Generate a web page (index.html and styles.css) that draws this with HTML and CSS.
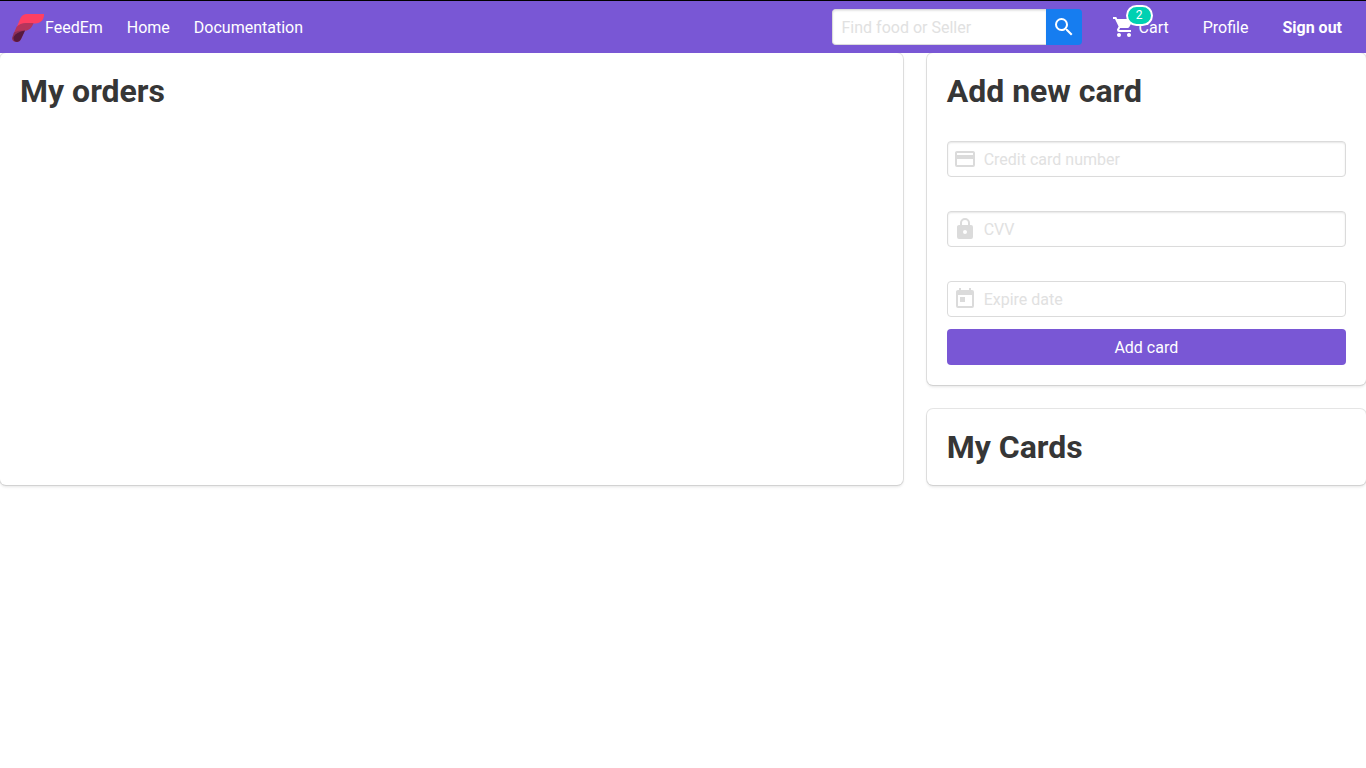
FILE: index.html
```html
<!DOCTYPE html>
<html lang="en">
<head>
<meta charset="utf-8">
<title>FeedEm</title>
<meta name="viewport" content="width=device-width, initial-scale=1">
<link rel="stylesheet" href="styles.css">
</head>
<body>
<header class="navbar">
  <nav class="navbar-start" aria-label="Main">
    <a class="navbar-item brand" href="#">
      <svg class="logo" viewBox="0 0 33 28" aria-hidden="true">
        <path fill="#ff3f62" d="M4 15 8.500 4Q10.500 0 15 0H32C32.500 5 29 9.500 23 9.500H14Q9 10 4 15Z"/>
        <path fill="#b5355c" d="M1.500 20 4.500 13Q8 9 14 9H21.500C20 14 16.500 17 11 17Q6 17.500 1.500 20Z"/>
        <path fill="#8f2f58" d="M0 24 2 18.500Q6 16 13 16.500L9 25Q8 28 5 28Q0 28 0 24Z"/>
        <path fill="#56193f" d="M1.500 23Q4 18 13 16.500L9 25Q7.500 28 5 28Q1 27.500 1.500 23Z"/>
      </svg>FeedEm</a>
    <a class="navbar-item" href="#">Home</a>
    <a class="navbar-item" href="#">Documentation</a>
  </nav>
  <div class="navbar-end">
    <form class="search" role="search">
      <input class="input search-input" type="text" placeholder="Find food or Seller" aria-label="Find food or Seller">
      <button class="search-button" type="button" aria-label="Search">
        <svg class="icon" viewBox="0 0 24 24" aria-hidden="true"><path d="M9.500 3A6.500 6.500 0 0 1 16 9.500C16 11.110 15.410 12.590 14.440 13.730L14.710 14H15.500L20.500 19L19 20.500L14 15.500V14.710L13.730 14.440C12.590 15.410 11.110 16 9.500 16A6.500 6.500 0 0 1 3 9.500A6.500 6.500 0 0 1 9.500 3M9.500 5C7 5 5 7 5 9.500C5 12 7 14 9.500 14C12 14 14 12 14 9.500C14 7 12 5 9.500 5Z"/></svg>
      </button>
    </form>
    <a class="end-link cart" href="#">
      <svg class="icon" viewBox="0 0 24 24" aria-hidden="true"><path d="M17 18C15.890 18 15 18.890 15 20A2 2 0 0 0 17 22A2 2 0 0 0 19 20C19 18.890 18.100 18 17 18M1 2V4H3L6.600 11.590L5.240 14.040C5.090 14.320 5 14.650 5 15A2 2 0 0 0 7 17H19V15H7.420A.25.25 0 0 1 7.170 14.750C7.170 14.700 7.180 14.660 7.200 14.630L8.100 13H15.550C16.300 13 16.960 12.580 17.300 11.970L20.880 5.500C20.950 5.340 21 5.170 21 5A1 1 0 0 0 20 4H5.210L4.270 2M7 18C5.890 18 5 18.890 5 20A2 2 0 0 0 7 22A2 2 0 0 0 9 20C9 18.890 8.100 18 7 18Z"/></svg>
      <span class="label">Cart</span>
      <span class="badge">2</span>
    </a>
    <a class="end-link label" href="#">Profile</a>
    <a class="end-link label strong" href="#">Sign out</a>
  </div>
</header>

<main class="tiles">
  <section class="box orders">
    <h1 class="title">My orders</h1>
  </section>
  <div class="side">
    <section class="box">
      <h1 class="title">Add new card</h1>
      <form class="card-form">
        <div class="control">
          <svg class="icon" viewBox="0 0 24 24" aria-hidden="true"><path d="M20 8H4V6H20M20 18H4V12H20M20 4H4C2.890 4 2 4.890 2 6V18A2 2 0 0 0 4 20H20A2 2 0 0 0 22 18V6C22 4.890 21.100 4 20 4Z"/></svg>
          <input class="input has-icon" type="text" placeholder="Credit card number" aria-label="Credit card number">
        </div>
        <div class="control">
          <svg class="icon" viewBox="0 0 24 24" aria-hidden="true"><path d="M12 17A2 2 0 0 0 14 15C14 13.890 13.100 13 12 13A2 2 0 0 0 10 15A2 2 0 0 0 12 17M18 8A2 2 0 0 1 20 10V20A2 2 0 0 1 18 22H6A2 2 0 0 1 4 20V10C4 8.890 4.900 8 6 8H7V6A5 5 0 0 1 12 1A5 5 0 0 1 17 6V8H18M12 3A3 3 0 0 0 9 6V8H15V6A3 3 0 0 0 12 3Z"/></svg>
          <input class="input has-icon" type="text" placeholder="CVV" aria-label="CVV">
        </div>
        <div class="control">
          <svg class="icon" viewBox="0 0 24 24" aria-hidden="true"><path d="M7 10H12V15H7M19 19H5V8H19M19 3H18V1H16V3H8V1H6V3H5C3.890 3 3 3.900 3 5V19A2 2 0 0 0 5 21H19A2 2 0 0 0 21 19V5A2 2 0 0 0 19 3Z"/></svg>
          <input class="input has-icon flat" type="text" placeholder="Expire date" aria-label="Expire date">
        </div>
        <button class="submit" type="button">Add card</button>
      </form>
    </section>
    <section class="box">
      <h1 class="title">My Cards</h1>
    </section>
  </div>
</main>
</body>
</html>
```
FILE: styles.css
```css
* {
  box-sizing: border-box;
}

body {
  margin: 0;
  border-top: 1px solid #000;
  background: #fff;
  color: #4a4a4a;
  font: 400 16px/24px Roboto, "Liberation Sans", sans-serif;
  text-rendering: optimizeLegibility;
}

button,
input {
  font: inherit;
  text-rendering: inherit;
}

a {
  color: inherit;
  text-decoration: none;
}

.icon {
  display: block;
  flex: none;
  width: 24px;
  height: 24px;
  fill: currentColor;
}

.navbar {
  position: relative;
  z-index: 1;
  display: flex;
  justify-content: space-between;
  min-height: 52px;
  background: #7957d5;
  color: #fff;
}

.navbar-start,
.navbar-end {
  display: flex;
  align-items: center;
}

.navbar-item {
  display: flex;
  align-items: center;
  padding: 8px 12px;
  line-height: 26px;
}

.navbar-start {
  padding-top: 1px;
}

.logo {
  width: 33px;
  height: 28px;
}

.navbar-end {
  gap: 34px;
  padding-right: 24px;
}

.label {
  padding-top: 2px;
}

.search {
  display: flex;
  margin-right: -4px;
}

.input {
  width: 100%;
  height: 36px;
  padding: 5px 9px;
  border: 1px solid #dbdbdb;
  border-radius: 4px;
  background: #fff;
  box-shadow: inset 0 1px 2px rgba(10, 10, 10, 0.1);
  color: #363636;
}

.input::placeholder {
  color: #e1e1e1;
  opacity: 1;
}

.search-input {
  width: 214px;
  border-right: 0;
  border-radius: 4px 0 0 4px;
}

.search-button {
  display: flex;
  align-items: center;
  justify-content: center;
  width: 36px;
  height: 36px;
  padding: 0;
  border: 0;
  border-radius: 0 4px 4px 0;
  background: #167df0;
  color: #fff;
}

.cart {
  position: relative;
  display: flex;
  align-items: center;
  gap: 3px;
}

.badge {
  position: absolute;
  top: -9px;
  left: 14px;
  width: 27px;
  height: 21px;
  border: 2px solid #fff;
  border-radius: 11px;
  background: #00d1b2;
  font-size: 12px;
  line-height: 17px;
  text-align: center;
}

.strong {
  font-weight: 700;
}

.tiles {
  display: grid;
  grid-template-columns: repeat(12, minmax(0, 1fr));
  gap: 24px;
  padding-bottom: 24px;
}

.orders {
  grid-column: span 8;
}

.side {
  display: flex;
  flex-direction: column;
  grid-column: span 4;
  gap: 24px;
}

.box {
  padding: 20px;
  border-radius: 6px;
  background: #fff;
  box-shadow: 0 2px 3px rgba(10, 10, 10, 0.1), 0 0 0 1px rgba(10, 10, 10, 0.1);
}

.title {
  margin: 0;
  color: #363636;
  font-size: 32px;
  font-weight: 700;
  line-height: 36px;
}

.card-form {
  display: flex;
  flex-direction: column;
  gap: 34px;
  margin-top: 32px;
}

.control {
  position: relative;
}

.control .icon {
  position: absolute;
  top: 6px;
  left: 6px;
  color: #dbdbdb;
}

.has-icon {
  padding-left: 36px;
}

.flat {
  box-shadow: none;
}

.submit {
  height: 36px;
  margin-top: -22px;
  padding: 2px 12px 0;
  border: 0;
  border-radius: 4px;
  background: #7957d5;
  color: #fff;
}

@media (max-width: 900px) {
  .navbar {
    flex-wrap: wrap;
  }

  .orders,
  .side {
    grid-column: span 12;
  }
}
```
